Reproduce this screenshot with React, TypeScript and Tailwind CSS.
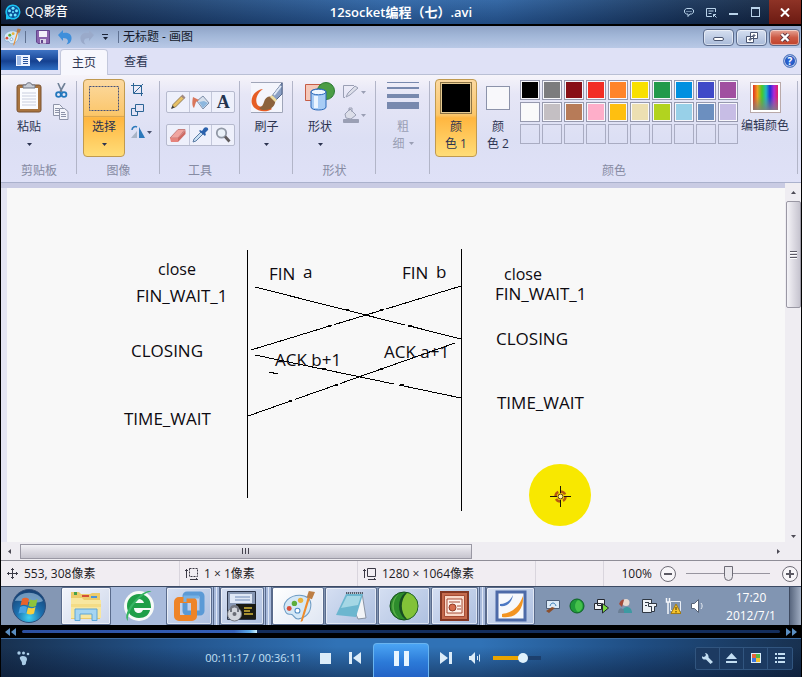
import type { ReactNode } from "react";

const ink = "text-[#2b3350]";

function Caret({ className = "" }: { className?: string }) {
  return (
    <svg width="5" height="3" viewBox="0 0 5 3" className={className} aria-hidden="true">
      <path d="M0 0h5L2.5 3z" fill="currentColor" />
    </svg>
  );
}

/* ---------- Player title bar ---------- */

function PlayerTitle() {
  return (
    <header className="grid h-[26px] grid-cols-[1fr_auto_1fr] border-b-2 border-black bg-[linear-gradient(rgba(255,255,255,0.06),rgba(0,0,20,0.22)),linear-gradient(90deg,#12233f_0%,#1d416f_22%,#2c64a6_48%,#2a60a0_62%,#17355c_85%,#12233c_100%)] text-white">
      <div className="flex items-center gap-1 pl-1">
        <svg width="16" height="16" viewBox="0 0 16 16" aria-hidden="true">
          <path d="M8 .5a7.500 7.500 0 1 1-3 14.400L1 15.500V11A7.500 7.500 0 0 1 8 .5z" fill="#19c4f4" />
          <circle cx="8" cy="8" r="6" fill="#0a4f96" />
          <g fill="#6fe6ff">
            <circle cx="8" cy="4.300" r="1.500" />
            <circle cx="11.500" cy="6.800" r="1.500" />
            <circle cx="10.200" cy="10.900" r="1.500" />
            <circle cx="5.800" cy="10.900" r="1.500" />
            <circle cx="4.500" cy="6.800" r="1.500" />
            <circle cx="8" cy="8" r="1" />
          </g>
        </svg>
        <span className="text-[12px] font-medium">QQ影音</span>
      </div>
      <h1 className="self-center text-[13px] leading-6 font-semibold">12socket编程（七）.avi</h1>
      <div className="flex items-stretch justify-end text-[#b9d3ea]">
        <button aria-label="反馈" className="flex w-[22px] items-center justify-center">
          <svg width="12" height="11" viewBox="0 0 12 11" fill="none" stroke="currentColor">
            <path d="M3.500 1.500h5l2 1.500v2.500l-2 1.500H7L5 9.500V7H3.500l-2-1.500V3z" />
            <path d="M3.500 4.500h1M5.500 4.500h1M7.500 4.500h1" />
          </svg>
        </button>
        <button aria-label="菜单" className="flex w-[22px] items-center justify-center">
          <svg width="11" height="11" viewBox="0 0 11 11" fill="none" stroke="currentColor">
            <path d="M6 9.500H.5v-8h9V5M2.500 4h5M2.500 6.500h3" />
            <path d="M7.500 10V7.500H10M7.500 7.500l3 3" />
          </svg>
        </button>
        <button aria-label="最小化" className="flex w-[22px] items-center justify-center">
          <span className="mt-1 h-0.5 w-[9px] bg-current" />
        </button>
        <button aria-label="最大化" className="mr-[3px] flex w-[22px] items-center justify-center">
          <span className="h-[10px] w-[9px] border border-t-2 border-current" />
        </button>
        <button aria-label="关闭" className="flex w-8 items-center justify-center bg-[linear-gradient(#8e3326,#6c1a12)] text-white">
          <svg width="10" height="9" viewBox="0 0 10 9" stroke="currentColor" strokeWidth="2">
            <path d="M1 .5l8 8M9 .5l-8 8" />
          </svg>
        </button>
      </div>
    </header>
  );
}

/* ---------- Paint window ---------- */

function PaletteIcon({ size }: { size: number }) {
  return (
    <svg width={size} height={size} viewBox="0 0 32 32" aria-hidden="true">
      <path d="M3 20C-1 12 8 5 17 5c7 0 11 4 11 9 0 8-5 13-12 14-5 .5-4-5-8-4.500C5 24 4 23 3 20z" fill="#d4e8f7" stroke="#6e9cc4" />
      <circle cx="7" cy="18" r="2.400" fill="#d94f3c" />
      <circle cx="12" cy="13" r="2.600" fill="#5cae3c" />
      <circle cx="18" cy="10" r="2.600" fill="#e9b33c" />
      <circle cx="15" cy="20" r="2.400" fill="#fff" stroke="#4c8ac4" />
      <path d="M27 8l-7 22-2 1 1-4 6-20z" fill="#ee8b2b" />
      <path d="M24 7l2-6 6 1-3 7z" fill="#bd7f45" />
    </svg>
  );
}

function PaintTitle() {
  const frame = "flex h-[17px] w-[31px] items-center justify-center rounded-sm border border-[#5b6b8c] shadow-[inset_0_0_0_1px_rgba(255,255,255,0.5)]";
  return (
    <div className="flex h-[22px] items-center bg-[linear-gradient(#8fa3c6,#a2b7d8_45%,#b9c9e6)] pl-0.5">
      <PaletteIcon size={18} />
      <span className="mx-1 h-3 w-px bg-[#5f7191]" />
      <button aria-label="保存" className="ml-1.5">
        <svg width="14" height="14" viewBox="0 0 14 14">
          <path d="M.5.5h13v13H2l-1.500-1.500z" fill="#8a63ad" stroke="#62458d" />
          <path d="M3 1h8v6H3z" fill="#f3effa" />
          <path d="M4 9h6v4.500H4z" fill="#d9d3ea" />
          <path d="M5 10h2v3H5z" fill="#62458d" />
        </svg>
      </button>
      <button aria-label="撤消" className="ml-2">
        <svg width="14" height="15" viewBox="0 0 14 15">
          <path d="M0 5l5-5v3c6-1 9 2 8.500 6-.3 3-2 5-5 5.500 2.500-3 2-6.500-3.500-6.500v3z" fill="#3f8fdb" />
        </svg>
      </button>
      <button aria-label="重做" className="ml-2">
        <svg width="14" height="15" viewBox="0 0 14 15">
          <path d="M14 5L9 0v3C3 2 0 5 .5 9c.3 3 2 5 5 5.500C3 11.500 3.500 8 9 8v3z" fill="#9aaaca" />
        </svg>
      </button>
      <button aria-label="自定义快速访问工具栏" className="ml-2 flex flex-col items-center gap-0.5 text-[#1c2437]">
        <span className="h-px w-1.5 bg-current" />
        <Caret />
      </button>
      <span className="mr-1 ml-2.5 h-3 w-px bg-[#5f7191]" />
      <h2 className="text-[12px] text-[#14192a]">无标题 - 画图</h2>
      <div className="mr-px ml-auto flex gap-0.5">
        <button aria-label="最小化" className={`${frame} bg-[linear-gradient(#d5dff0,#a9bad9)]`}>
          <span className="mt-1 h-1 w-[11px] rounded-xs border border-[#4a5570] bg-white" />
        </button>
        <button aria-label="向下还原" className={`${frame} bg-[linear-gradient(#d5dff0,#a9bad9)]`}>
          <svg width="12" height="11" viewBox="0 0 12 11" fill="#fff" stroke="#4a5570">
            <path d="M4.500.5h7v6h-7zM7 3h2v1H7zM.5 4.500h7v6h-7zM3 7h2v1H3z" />
          </svg>
        </button>
        <button aria-label="关闭" className={`${frame} bg-[linear-gradient(#e6a597,#cc5a45_50%,#c0412a)]`}>
          <svg width="12" height="9" viewBox="0 0 12 9">
            <path d="M2.500 1l7 7M9.500 1l-7 7" stroke="#5d3440" strokeWidth="4" />
            <path d="M2.500 1l7 7M9.500 1l-7 7" stroke="#fff" strokeWidth="2.400" />
          </svg>
        </button>
      </div>
    </div>
  );
}

function Tabs() {
  return (
    <nav className="flex h-[27px] items-stretch border-b border-[#b9bfd4] bg-[#dfe1f6]">
      <button aria-label="文件" className="mt-0.5 mb-1 flex w-[57px] items-center justify-center gap-1.5 bg-[linear-gradient(#3f74c4,#1f4d9e_45%,#15408f_55%,#2f6fc4)] text-white">
        <svg width="14" height="11" viewBox="0 0 14 11">
          <path d="M0 0h14v11H0z" fill="#eef4ff" />
          <path d="M1 1h4v9H1z" fill="#9fbbe6" />
          <path d="M7 2.500h5M7 4.500h5M7 6.500h5M7 8.500h5" stroke="#2a549c" />
        </svg>
        <svg width="7" height="4" viewBox="0 0 7 4">
          <path d="M0 0h7L3.500 4z" fill="currentColor" />
        </svg>
      </button>
      <button className="mt-px -mb-px ml-0.5 w-12 rounded-t-sm border border-b-0 border-[#c3c8dc] bg-[#f7f7fd] text-[12px] text-[#2b3350]">主页</button>
      <button className="ml-1 w-12 pt-px text-[12px] text-[#2b3350]">查看</button>
      <button aria-label="帮助" className="mr-1 ml-auto flex size-[14px] items-center justify-center self-center rounded-full border border-[#5d7fc0] bg-[radial-gradient(#2f6de0,#1c45a6)] text-[10px] leading-none font-bold text-white shadow-[inset_0_0_0_1px_rgba(255,255,255,0.7)]">
        ?
      </button>
    </nav>
  );
}

function Group({ label, width, children }: { label?: string; width: string; children: ReactNode }) {
  return (
    <section className={`${width} flex shrink-0 flex-col pt-1`}>
      <div className="flex h-[84px] items-start">{children}</div>
      <p className="text-center text-[12px] leading-4 text-[#868ba3]">{label}</p>
    </section>
  );
}

function Divider() {
  return <span className="-ml-px mt-1.5 mb-2 w-px shrink-0 bg-[#b2b5c8]" />;
}

const rowOne = ["bg-[#000000]", "bg-[#7c7c7e]", "bg-[#880f17]", "bg-[#f22e25]", "bg-[#ff8429]", "bg-[#f9e000]", "bg-[#229a4b]", "bg-[#0190e0]", "bg-[#3f49c8]", "bg-[#a04fa0]"];
const rowTwo = ["bg-[#fafafa]", "bg-[#c4bfc3]", "bg-[#b77b58]", "bg-[#feaec9]", "bg-[#ffbf10]", "bg-[#ecdfb2]", "bg-[#b2d31f]", "bg-[#98d0e8]", "bg-[#6c8fbf]", "bg-[#c7bde5]"];

function Ribbon() {
  const cell = "flex h-5 flex-1 items-center justify-center";
  const shelf = "flex w-[69px] items-stretch divide-x divide-[#c3c7da] rounded-xs border border-[#b6bace] bg-[#eef0fb]";
  return (
    <div className="flex h-[108px] overflow-hidden border-b border-[#aab1cc] bg-[linear-gradient(#f6f4fa,#e6e6f6_18%,#dcdff4_60%,#dfe1f7)]">
      <Group label="剪贴板" width="w-[76px]">
        <button className={`ml-3 flex w-8 flex-col items-center pt-[3px] ${ink}`}>
          <svg width="26" height="31" viewBox="0 0 26 31" aria-hidden="true">
            <rect x="1" y="3" width="24" height="27" rx="2" fill="#a9743f" stroke="#7a5230" />
            <path d="M4 6h18v21H4z" fill="#fbfcff" />
            <path d="M6 11h14M6 14h14M6 17h14M6 20h14M6 23h14" stroke="#c9cede" />
            <path d="M7 6V3h3c0-3 6-3 6 0h3v3z" fill="#c8ccd5" stroke="#6e7484" />
          </svg>
          <span className="mt-1.5 text-[12px] leading-4">粘贴</span>
          <Caret className="mt-2" />
        </button>
        <div className="mt-1 ml-2 flex flex-col gap-1.5">
          <button aria-label="剪切">
            <svg width="16" height="15" viewBox="0 0 16 15" fill="none">
              <path d="M5 0l4 9M12 0L7 9" stroke="#6f8096" strokeWidth="1.600" />
              <circle cx="5.500" cy="11.500" r="2.400" stroke="#2478bd" strokeWidth="1.800" />
              <circle cx="11" cy="11.500" r="2.400" stroke="#2478bd" strokeWidth="1.800" />
            </svg>
          </button>
          <button aria-label="复制">
            <svg width="16" height="16" viewBox="0 0 16 16" fill="#f4f5fb" stroke="#8d93a8">
              <path d="M.5.5h6l3 3v8h-9zM2 4.500h4M2 6.500h4M2 8.500h4" />
              <path d="M6.500 4.500h5l3.500 3v8H6.500zM8 8.500h4M8 10.500h5M8 12.500h5" />
            </svg>
          </button>
        </div>
      </Group>
      <Divider />
      <Group label="图像" width="w-[83px]">
        <button className={`ml-1.5 flex h-[78px] w-[42px] flex-col items-center rounded-sm border border-[#c09a50] bg-[linear-gradient(#fcd9a0,#fbc66a_46%,#ffb640_50%,#ffdd78)] ${ink}`}>
          <span className="flex h-[37px] w-full items-center justify-center border-b border-[#d9a753]">
            <svg width="30" height="25" viewBox="0 0 30 25" aria-hidden="true">
              <rect x=".5" y=".5" width="29" height="24" fill="none" stroke="#45507a" strokeDasharray="2 1" />
            </svg>
          </span>
          <span className="mt-0.5 text-[12px] leading-4">选择</span>
          <Caret className="mt-2" />
        </button>
        <div className="mt-1 ml-1.5 flex flex-col items-start gap-2 text-[#2b6495]">
          <button aria-label="裁剪">
            <svg width="14" height="13" viewBox="0 0 14 13" fill="none" stroke="currentColor">
              <path d="M2.500 0v10.500H12M0 2.500h10.500V13M3 10l9-9" />
            </svg>
          </button>
          <button aria-label="重新调整大小">
            <svg width="14" height="13" viewBox="0 0 14 13" fill="none" stroke="currentColor">
              <path d="M4.500.5h8v7h-8zM4 4.500H.5v7h6V8" />
            </svg>
          </button>
          <button aria-label="旋转" className="flex items-center gap-0.5">
            <svg width="14" height="14" viewBox="0 0 14 14">
              <path d="M8 2v11h6z" fill="#2c79bb" />
              <path d="M6 6v7H0z" fill="#a9b4c6" />
              <path d="M1 5c0-3 3-4 5-3" fill="none" stroke="#2c79bb" strokeWidth="1.500" />
            </svg>
            <Caret className="text-[#4a5270]" />
          </button>
        </div>
      </Group>
      <Divider />
      <Group label="工具" width="w-20">
        <div className="mt-3 ml-1.5 flex flex-col gap-[11px]">
          <div className={shelf}>
            <button aria-label="铅笔" className={cell}>
              <svg width="16" height="16" viewBox="0 0 16 16">
                <path d="M2 14l1-3.500L11.500 2 14 4.500 5.500 13z" fill="#e7c065" stroke="#7d6a48" strokeWidth=".8" />
                <path d="M1 15l1.500-3.500 2 2z" fill="#3b3b3b" />
                <path d="M11 2l1.500-1.500 3 3L14 5z" fill="#a08a86" />
              </svg>
            </button>
            <button aria-label="用颜色填充" className={cell}>
              <svg width="18" height="17" viewBox="0 0 18 17">
                <path d="M5 7l6-5 6 7-6 6z" fill="#d7e0ec" stroke="#8090aa" />
                <path d="M7 8l5-1 4 2-5 5z" fill="#8db7de" />
                <path d="M1 3l6 3-3 2-2 6C0 12 0 8 1 3z" fill="#d9765b" />
              </svg>
            </button>
            <button aria-label="文本" className={`${cell} font-["Liberation_Serif",serif] text-[18px] leading-none font-bold text-[#24344f]`}>
              A
            </button>
          </div>
          <div className={shelf}>
            <button aria-label="橡皮擦" className={cell}>
              <svg width="18" height="15" viewBox="0 0 18 15">
                <path d="M1 10L9 1.500h7L9 10z" fill="#f0a5a0" stroke="#c87f7d" />
                <path d="M1 10h8v4H2z" fill="#e5837c" />
                <path d="M9 10l7.500-8v4L9 14z" fill="#cf6a63" />
              </svg>
            </button>
            <button aria-label="颜色选取器" className={cell}>
              <svg width="17" height="16" viewBox="0 0 17 16">
                <path d="M1 15l1-3 7-7 2 2-7 7z" fill="#c9e0f4" stroke="#5c7da5" />
                <path d="M7 4l6 5 1-2-1-1 3-3c1-2-2-4-4-2L10 4 8 3z" fill="#2b62ad" />
              </svg>
            </button>
            <button aria-label="放大镜" className={cell}>
              <svg width="16" height="16" viewBox="0 0 16 16">
                <circle cx="6.500" cy="6" r="4.700" fill="#eaf1f8" stroke="#9198a5" strokeWidth="1.800" />
                <path d="M10 9.500l4.500 5" stroke="#5f5b5c" strokeWidth="2.800" />
              </svg>
            </button>
          </div>
        </div>
      </Group>
      <Divider />
      <Group width="w-[53px]">
        <button className={`flex w-full flex-col items-center pt-[3px] ${ink}`}>
          <svg width="32" height="31" viewBox="0 0 32 31" aria-hidden="true">
            <path d="M0 0h32v31H0z" fill="#f4f5fc" />
            <path d="M0 .5h31.500v30H0" fill="none" stroke="#9fa5b8" />
            <path d="M12 7C4 8-1 15 1 22c3 8 14 9 20 5l-6-6c-1 4-7 5-9 1S6 11 12 7z" fill="#e65d25" />
            <path d="M13 20c1-5 6-7 10-4 3 4 0 9-4 11-4 2-10 1-11-1 3-1 4-3 5-6z" fill="#8c623c" />
            <path d="M21 14L31 1v11l-6 6z" fill="#8ba0c4" stroke="#53678c" />
            <path d="M23 13l7-9" stroke="#dfe8f5" strokeWidth="2" />
            <path d="M19 15l2-2 5 5-2 2z" fill="#eddca0" />
          </svg>
          <span className="mt-1.5 text-[12px] leading-4">刷子</span>
          <Caret className="mt-2" />
        </button>
      </Group>
      <Divider />
      <Group label="形状" width="w-[83px]">
        <button className={`ml-[11px] flex w-8 flex-col items-center pt-[3px] ${ink}`}>
          <svg width="30" height="31" viewBox="0 0 30 31" aria-hidden="true">
            <path d="M.5 2.500h16v16H.5z" fill="#f5c8b9" stroke="#c65c45" />
            <circle cx="21" cy="9" r="8.500" fill="#4b9d45" stroke="#2c7a34" />
            <path d="M6 10c0-4 15-4 15 0v15c0 4-15 4-15 0z" fill="#a8ccf5" stroke="#2867b8" />
            <ellipse cx="13.500" cy="10" rx="7.500" ry="2.800" fill="#eef6ff" stroke="#2867b8" />
            <path d="M11 14v12" stroke="#eaf4ff" strokeWidth="4" />
          </svg>
          <span className="mt-1.5 text-[12px] leading-4">形状</span>
          <Caret className="mt-2" />
        </button>
        <div className="mt-1.5 ml-[7px] flex flex-col gap-2 text-[#9a9fb4]">
          <button aria-label="形状轮廓" className="flex items-center gap-0.5">
            <svg width="16" height="14" viewBox="0 0 16 14" fill="#dcdee9" stroke="currentColor">
              <path d="M11 .5H.5v12H2" fill="none" />
              <path d="M3 12l2-4 7-7 3 2-8 7z" />
            </svg>
            <Caret />
          </button>
          <button aria-label="形状填充" className="flex items-center gap-0.5">
            <svg width="16" height="16" viewBox="0 0 16 16" fill="#dcdee9" stroke="currentColor">
              <path d="M2 7l5-5 6 6-5 4-5-1zM6 4V1h3v4" />
              <path d="M.5 12.500h15v3H.5z" fill="currentColor" />
            </svg>
            <Caret />
          </button>
        </div>
      </Group>
      <Divider />
      <Group width="w-[54px]">
        <button className="flex w-full flex-col items-center pt-[3px] text-[#9a9fb4]">
          <svg width="32" height="28" viewBox="0 0 32 28" fill="#7889ae" aria-hidden="true">
            <path d="M0 0h32v1H0zM0 5h32v2H0zM0 12h32v4H0zM0 20h32v7H0z" />
          </svg>
          <span className="mt-2 text-center text-[12px] leading-[17px]">
            粗
            <span className="flex items-center gap-1">
              细
              <Caret />
            </span>
          </span>
        </button>
      </Group>
      <Divider />
      <section className="flex min-w-[368px] flex-1 flex-col pt-1">
        <div className="flex h-[84px] items-start">
          <button className={`ml-[5px] flex h-[78px] w-[42px] shrink-0 flex-col items-center rounded-sm border border-[#c09a50] bg-[linear-gradient(#fcd9a0,#fbc66a_46%,#ffb640_50%,#ffdd78)] ${ink}`}>
            <span className="mt-0.5 size-8 border border-[#8d7445] bg-black shadow-[inset_0_0_0_1px_#e7cb92]" />
            <span className="mt-1 text-center text-[12px] leading-[17px]">
              颜
              <br />色 1
            </span>
          </button>
          <button className={`flex h-[78px] w-[42px] shrink-0 flex-col items-center ${ink}`}>
            <span className="mt-[7px] size-6 border border-[#8c93aa] bg-[#f8f8fb]" />
            <span className="mt-2 text-center text-[12px] leading-[17px]">
              颜
              <br />色 2
            </span>
          </button>
          <div className="mt-px ml-px grid shrink-0 grid-cols-10 gap-0.5">
            {[...rowOne, ...rowTwo].map((c) => (
              <button key={c} aria-label="颜色" className={`${c} size-5 border border-[#9699ae] shadow-[inset_0_0_0_1px_#f8f8fc]`} />
            ))}
            {rowOne.map((c) => (
              <button key={c} aria-label="自定义颜色" className="size-5 border border-[#a9acc2]" />
            ))}
          </div>
          <button className={`ml-[3px] flex w-12 shrink-0 flex-col items-center pt-1 text-[12px] whitespace-nowrap ${ink}`}>
            <span className="size-[29px] border-2 border-white bg-[linear-gradient(rgba(128,128,128,0)_45%,rgba(128,128,128,0.85)),linear-gradient(90deg,#e03020,#f0a020_18%,#48c828_36%,#20b8c0_52%,#2030d8_68%,#b028d8_84%,#e02060)] shadow-[0_0_0_1px_#b9a9a9]" />
            <span className="mt-1.5 leading-4">编辑颜色</span>
          </button>
        </div>
        <p className="text-center text-[12px] leading-4 text-[#868ba3]">颜色</p>
      </section>
      <Divider />
      <span className="w-[3px] shrink-0" />
    </div>
  );
}

/* ---------- Drawing ---------- */

const notes: [number, number, string][] = [
  [136, 302, "FIN_WAIT_1"],
  [131, 357, "CLOSING"],
  [124, 425, "TIME_WAIT"],
  [269, 280, "FIN"],
  [303, 278, "a"],
  [402, 279, "FIN"],
  [436, 278, "b"],
  [275, 366, "ACK b+1"],
  [384, 358, "ACK a+1"],
  [495, 300, "FIN_WAIT_1"],
  [496, 345, "CLOSING"],
  [497, 409, "TIME_WAIT"],
];

function Drawing() {
  return (
    <svg width="778" height="354" viewBox="7 188 778 354" className="block" role="img" aria-label="TCP 同时关闭">
      <g stroke="#000" shapeRendering="crispEdges">
        <path d="M247.500 250v248M461.500 249v262" />
        <path d="M255 287l150 38M408 325.600L461 339" />
        <path d="M461 286l-75 23M384 309.500l-50 15.200M332 325.300L251 350" />
        <path d="M255 355l139 29M399 385l62 13" />
        <path d="M455 343l-115 40.600M338 384.300l-43 15.100M292 400.500L248 416" />
        <path d="M269 372l9 2" />
      </g>
      <path d="M346 309h3v2h-3zM328 325h3v2h-3zM408 325h4v2h-4zM380 309h3v2h-3zM335 384h3v2h-3zM289 400h3v2h-3zM322 368h4v2h-4zM380 368h3v2h-3zM400 384h4v2h-4z" />
      <g fill="#0d0a10" fontSize="17">
        {notes.map(([x, y, text]) => (
          <text key={`${x}-${y}`} x={x} y={y}>
            {text}
          </text>
        ))}
      </g>
      <g fill="#0d0a10" fontSize="16">
        <text x="158" y="275">close</text>
        <text x="504" y="280">close</text>
      </g>
      <circle cx="560" cy="495" r="31" fill="#f8e800" />
      <circle cx="560.500" cy="496.500" r="5" fill="none" stroke="#b85a12" strokeWidth="2.500" strokeDasharray="5 2.850" />
      <circle cx="560.500" cy="496.500" r="2.500" fill="#fff3a0" stroke="#5c2d0c" />
      <path d="M560.500 486v7M560.500 500v7M550 496.500h7M564 496.500h7" stroke="#1d1606" />
    </svg>
  );
}

function Workspace() {
  return (
    <main className="grid flex-1 grid-cols-[6px_1fr_16px] grid-rows-[1fr_18px] bg-[#efedf2]">
      <div className="border-t-[5px] border-[#c9cbe3] bg-[#e4e5f3]" />
      <div className="overflow-hidden border-t-[5px] border-[#c9cbe3] bg-[#f8f8f8]">
        <Drawing />
      </div>
      <div className="flex flex-col items-center pt-2 pb-1 text-[#4c4a55]">
        <Caret className="rotate-180" />
        <div className="mt-[7px] flex h-[107px] w-[15px] flex-col items-center justify-center gap-px rounded-xs border border-[#9a98a4] bg-[linear-gradient(90deg,#f4f3f7,#dddbe3_50%,#c6c4cf)]">
          <span className="h-0.5 w-[7px] border-b border-white bg-[#5d5b66]" />
          <span className="h-0.5 w-[7px] border-b border-white bg-[#5d5b66]" />
          <span className="h-0.5 w-[7px] border-b border-white bg-[#5d5b66]" />
        </div>
        <Caret className="mt-auto" />
      </div>
      <div className="col-span-2 flex items-center pr-1 pl-1.5 text-[#4c4a55]">
        <Caret className="rotate-90" />
        <div className="ml-2 flex h-[15px] w-7/12 items-center justify-center gap-0.5 border border-[#9a98a4] bg-[linear-gradient(#f2f1f5,#dbd9e1_50%,#c6c4ce)]">
          <span className="h-1.5 w-px bg-[#45434e]" />
          <span className="h-1.5 w-px bg-[#45434e]" />
          <span className="h-1.5 w-px bg-[#45434e]" />
        </div>
        <Caret className="ml-auto -rotate-90" />
      </div>
    </main>
  );
}

function StatusBar() {
  return (
    <footer className="flex h-[26px] items-stretch border-t border-[#8f8d97] bg-[#f1edf2] text-[12px] text-[#1d1b24] *:items-center">
      <p className="flex w-[179px] gap-1.5 border-r border-[#d9d5dd] pl-1.5">
        <svg width="11" height="11" viewBox="0 0 11 11" fill="none" stroke="#3b3945">
          <path d="M5.500 0v11M0 5.500h11M4 1.500h3M4 9.500h3M1.500 4v3M9.500 4v3" />
        </svg>
        553, 308像素
      </p>
      <p className="flex w-[178px] gap-1.5 border-r border-[#d9d5dd] pl-[5px]">
        <svg width="13" height="12" viewBox="0 0 13 12" fill="none" stroke="#3b3945">
          <path d="M1.500 1v9M0 2.500h3M5 11.500h8M11.500 10v2" />
          <path d="M4.500.5h8v8h-8z" strokeDasharray="2 1" />
        </svg>
        1 × 1像素
      </p>
      <p className="flex w-[178px] gap-1.5 border-r border-[#d9d5dd] pl-[5px]">
        <svg width="13" height="12" viewBox="0 0 13 12" fill="none" stroke="#3b3945">
          <path d="M1.500 1v9M0 2.500h3M5 11.500h8M11.500 10v2M4.500.5h8v8h-8z" />
        </svg>
        1280 × 1064像素
      </p>
      <span className="w-[68px] border-r border-[#d9d5dd]" />
      <div className="ml-auto flex pr-[3px]">
        <label htmlFor="zoom">100%</label>
        <button aria-label="缩小" className="ml-2 flex size-4 items-center justify-center rounded-full border border-[#6e6c76] bg-[#f8f6f9]">
          <span className="h-0.5 w-2 bg-[#5c5a64]" />
        </button>
        <input
          id="zoom"
          type="range"
          defaultValue={50}
          className="mx-2.5 h-4 w-[84px] appearance-none bg-[linear-gradient(#98959f,#98959f)] bg-[length:100%_1px] bg-center bg-no-repeat [&::-webkit-slider-thumb]:h-[15px] [&::-webkit-slider-thumb]:w-[9px] [&::-webkit-slider-thumb]:appearance-none [&::-webkit-slider-thumb]:rounded-b-md [&::-webkit-slider-thumb]:border [&::-webkit-slider-thumb]:border-[#6e6c76] [&::-webkit-slider-thumb]:bg-[#e9e7ec]"
        />
        <button aria-label="放大" className="ml-0.5 flex size-4 items-center justify-center rounded-full border border-[#6e6c76] bg-[#f8f6f9]">
          <svg width="8" height="8" viewBox="0 0 8 8" stroke="#5c5a64" strokeWidth="2">
            <path d="M4 0v8M0 4h8" />
          </svg>
        </button>
      </div>
    </footer>
  );
}

/* ---------- Windows taskbar ---------- */

function Task({ label, width, tone = "bg-[linear-gradient(135deg,#d5dff2,#aec0e0)]", children }: { label: string; width: string; tone?: string; children: ReactNode }) {
  return (
    <button aria-label={label} className={`${width} ${tone} flex shrink-0 items-center justify-center rounded-xs border border-[#5a6b8c] shadow-[inset_0_0_0_1px_rgba(255,255,255,0.55)]`}>
      {children}
    </button>
  );
}

function Stack() {
  return (
    <span className="flex w-2 shrink-0 gap-0.5 bg-[#a9bbdc] pl-px">
      <span className="w-px bg-[#5a6b8c]" />
      <span className="w-px bg-[#dfe7f6]" />
      <span className="w-px bg-[#5a6b8c]" />
    </span>
  );
}

function Taskbar() {
  return (
    <div className="flex h-[39px] items-stretch overflow-hidden border-t border-[#3c4a63] bg-[#8195b2]">
      <button aria-label="开始" className="flex w-[60px] shrink-0 items-center justify-center bg-[#8497b4] pr-1">
        <svg width="36" height="36" viewBox="0 0 36 36">
          <defs>
            <radialGradient id="orb" cx=".5" cy=".85" r=".85">
              <stop offset="0" stopColor="#3fd0f0" />
              <stop offset=".45" stopColor="#1c6fae" />
              <stop offset="1" stopColor="#173d6e" />
            </radialGradient>
          </defs>
          <circle cx="18" cy="18" r="16.500" fill="url(#orb)" stroke="#2e4f7c" />
          <path d="M4 13C8 2 28 2 32 13 24 17 14 12 4 13z" fill="#a9c9e4" opacity=".6" />
          <path d="M11 11c3-2 5-1 7 0l-1.500 6.500c-2.500-1-4.500-1-7 0z" fill="#e8632b" />
          <path d="M19 11.500c3 1 5 1 7.500-.5L25 18c-3 1.500-5 1-7.500 0z" fill="#8fc43c" />
          <path d="M9 19c3-1.500 5-1 7 0l-1.500 6.500c-2-1-4.500-1-7 0z" fill="#4ba3e3" />
          <path d="M17 19.500c3 1 5 1 7.500-.5L23 25.500c-3 1.500-5 1-7.500 0z" fill="#f8cf3d" />
        </svg>
      </button>
      <Task label="资源管理器" width="w-[50px]" tone="bg-[linear-gradient(135deg,#f3f5fb,#ccd6ea)]">
        <svg width="32" height="30" viewBox="0 0 32 30">
          <path d="M1 4V1h8l2 2h9l2-1h8v26H1z" fill="#eccb6c" />
          <path d="M4 1h3v3H4z" fill="#46a049" />
          <path d="M12 4h7v2h-7z" fill="#d35038" />
          <path d="M21 5h6v2h-6z" fill="#4c94d8" />
          <path d="M1 7h11l2 2h17v18H1z" fill="#f8e7a0" />
          <path d="M1 13h30v3H1z" fill="#f4dc86" />
          <path d="M5 29.500V18h22v11.500h-5V23H10v6.500z" fill="#a5d5f2" stroke="#5ea5d6" />
        </svg>
      </Task>
      <button aria-label="浏览器" className="flex w-[55px] shrink-0 items-center justify-center bg-[#a9bbdc]">
        <svg width="32" height="32" viewBox="0 0 32 32">
          <circle cx="16" cy="16" r="15" fill="#f7faf8" />
          <path d="M28 17c0-8-5-13-12-13S4 9 4 16s5 12 12 12c6 0 10-3 11-8h-7c-1 2-2 3-4 3-3 0-5-2-5-5h17zM11 13c1-3 3-4 5-4s4 1 5 4z" fill="#1f9f48" fillRule="evenodd" />
          <path d="M5 31C1 28 4 18 13 9S27 0 29 2c-4-1-9 3-15 9S4 26 5 31z" fill="#36b463" />
        </svg>
      </button>
      <Task label="虚拟机" width="w-[46px]">
        <svg width="32" height="32" viewBox="0 0 32 32" fill="none">
          <rect x="12" y="4" width="17" height="19" rx="2" stroke="#5b9ad6" strokeWidth="5" />
          <rect x="4" y="10" width="17" height="18" rx="2" stroke="#ee8428" strokeWidth="6" />
          <path d="M12 12V7h14" stroke="#76b2e6" strokeWidth="3" />
        </svg>
      </Task>
      <Stack />
      <Task label="终端" width="w-[44px]">
        <svg width="32" height="32" viewBox="0 0 32 32">
          <path d="M1.500 1.500h28v28h-28z" fill="#8797b3" stroke="#2b354a" />
          <path d="M4 4h22v9H4z" fill="#dfe8f6" />
          <path d="M9 7h15M9 10h15" stroke="#6f8ab7" />
          <path d="M10 14h20v15H10z" fill="#191a14" />
          <path d="M18 18h8M18 21h6M18 24h9" stroke="#d6b93b" strokeWidth="1.500" />
          <circle cx="8.500" cy="24" r="7" fill="#d3d6dc" stroke="#72767f" />
          <path d="M5 22v-3c0-4 7-4 7 0v3" fill="none" stroke="#72767f" strokeWidth="2" />
          <circle cx="8.500" cy="24" r="2" fill="#6a6d75" />
        </svg>
      </Task>
      <Stack />
      <Task label="画图" width="w-[52px]" tone="bg-[linear-gradient(135deg,#ffffff,#dfe6f3)]">
        <PaletteIcon size={33} />
      </Task>
      <Task label="记事本" width="w-[52px]" tone="ml-px bg-[linear-gradient(135deg,#d5dff2,#aec0e0)]">
        <svg width="32" height="30" viewBox="0 0 32 30">
          <path d="M12 2h15l4 25-8 1z" fill="#f2f4f7" stroke="#8a93a3" />
          <path d="M11 3h17l-7 23L1 24z" fill="#6cb6cf" />
          <path d="M12 5h14l-3 9L6 17z" fill="#a5d7e5" />
          <path d="M11 2h18" stroke="#545c6b" strokeWidth="2" strokeDasharray="1 1" />
        </svg>
      </Task>
      <Task label="音乐" width="w-[52px]" tone="ml-px bg-[linear-gradient(135deg,#d5dff2,#aec0e0)]">
        <svg width="32" height="32" viewBox="0 0 32 32">
          <circle cx="16" cy="16" r="14" fill="#2d8c2c" stroke="#15501c" />
          <path d="M11 4C4 10 4 22 11 28 2 24 2 9 11 4z" fill="#5aae49" />
          <path d="M17 3c-8 6-8 20 0 26 8 0 8-26 0-26z" fill="#174d22" />
          <path d="M19 3c-7 7-7 19 0 26 14-3 14-23 0-26z" fill="#82c238" />
        </svg>
      </Task>
      <Task label="演示文稿" width="w-[47px]" tone="ml-px bg-[linear-gradient(135deg,#d5dff2,#aec0e0)]">
        <svg width="29" height="30" viewBox="0 0 29 30">
          <path d="M1 1h27v28H1z" fill="#c56a4d" stroke="#823623" strokeWidth="2" />
          <path d="M4.500 4.500h20v21h-20z" fill="#f9d8c9" stroke="#a64b34" />
          <path d="M7 8h15v14H7z" fill="#fff3ed" stroke="#a64b34" />
          <path d="M9 11h11M17 15h4M17 18h4" stroke="#a64b34" />
          <circle cx="12.500" cy="16.500" r="3.500" fill="#d66c4d" stroke="#8f3b27" />
        </svg>
      </Task>
      <Stack />
      <Task label="远程桌面" width="w-[49px]" tone="bg-[linear-gradient(135deg,#d5dff2,#aec0e0)]">
        <svg width="32" height="32" viewBox="0 0 32 32">
          <path d="M2 2h28v28H2z" fill="#f6f8fc" stroke="#4d6aa8" strokeWidth="3" />
          <path d="M5 14c6 0 10-3 13-9-1 7-6 12-13 11z" fill="#4b78c4" />
          <path d="M7 24c10-1 17-7 21-18 1 13-7 23-21 21z" fill="#f29422" />
        </svg>
      </Task>
      <div className="ml-auto flex items-center gap-2 pl-2">
        <svg width="16" height="16" viewBox="0 0 16 16">
          <path d="M1.500 2.500h13v8h-13z" fill="#dbe9f6" stroke="#4c5e78" />
          <path d="M5 8c1-4 5-4 6 0" stroke="#3d7fb8" fill="none" />
          <path d="M1 13l6-4 3 1-6 5z" fill="#8c4f2c" />
        </svg>
        <svg width="16" height="16" viewBox="0 0 16 16">
          <circle cx="8" cy="8" r="7" fill="#1f9a3a" stroke="#0d6124" />
          <path d="M9 2c-4 3-4 9 0 12 6-2 6-10 0-12z" fill="#45c14b" />
        </svg>
        <svg width="16" height="16" viewBox="0 0 16 16" stroke="#23272f">
          <path d="M4.500 1.500h7v6h-7zM1.500 5.500h7v6h-7z" fill="#f2f4f7" />
          <path d="M9.500 5.500l6 4.500-6 5z" fill="#7bdc3e" />
        </svg>
        <svg width="16" height="16" viewBox="0 0 16 16">
          <circle cx="9" cy="4.500" r="3.500" fill="#ead9cf" />
          <path d="M5 15c0-8 10-8 10 0z" fill="#3d9aa2" />
          <path d="M2 6c2-5 5-5 5-4l-2 7z" fill="#a44b3a" />
          <path d="M1 15c0-6 5-6 6-2v2z" fill="#6b7f95" />
        </svg>
        <svg width="16" height="16" viewBox="0 0 16 16" fill="#eef2f7" stroke="#2f3742">
          <path d="M1.500 1.500h9v13h-9z" />
          <path d="M4 4.500h4M4 7.500h2M10.500 1.500v3M7.500 5.500h8v3h-2v5h-3v-5h-3z" />
        </svg>
        <svg width="16" height="16" viewBox="0 0 16 16">
          <path d="M5.500 3.500h10v9h-10z" fill="#7f93ad" stroke="#e9eef5" />
          <path d="M1.500 0v4h3V0M3 4v12" stroke="#f4f6fa" strokeWidth="1.500" fill="none" />
          <path d="M11 6l5 9.500H6z" fill="#f7c52c" stroke="#a67b10" />
          <path d="M11 9v3M11 13v1.500" stroke="#3b2e06" />
        </svg>
        <svg width="16" height="16" viewBox="0 0 16 16">
          <path d="M2.500 5.500h3l4-4v13l-4-4h-3z" fill="#fff" stroke="#566276" />
          <path d="M12 5c1.500 2 1.500 4 0 6" stroke="#e9eef5" fill="none" />
        </svg>
      </div>
      <p className="mr-2.5 ml-[18px] w-14 shrink-0 pt-0.5 text-center text-[12px] leading-[18px] text-white">
        17:20
        <br />
        2012/7/1
      </p>
      <button aria-label="显示桌面" className="w-3 shrink-0 border-l border-[#3e4a60] bg-[linear-gradient(90deg,#59677f,#a0adc2)]" />
    </div>
  );
}

/* ---------- Player controls ---------- */

function Player() {
  const tool = "flex w-6 items-center justify-center";
  return (
    <>
      <div className="flex h-[13px] items-center justify-between gap-1.5 bg-black px-1 text-[#5b8fc2]">
        <button aria-label="快退">
          <svg width="11" height="8" viewBox="0 0 11 8" fill="currentColor">
            <path d="M5 0v8L0 4zM11 0v8L6 4z" />
          </svg>
        </button>
        <input
          type="range"
          aria-label="播放进度"
          defaultValue={31}
          className="h-[3px] min-w-0 flex-1 appearance-none rounded-full bg-[linear-gradient(90deg,#2c4f9e,#3560b8_28%,#5aa8e8_30%,#cdf2ff_31%,#142e5c_31%)] [&::-webkit-slider-thumb]:size-0.5 [&::-webkit-slider-thumb]:appearance-none"
        />
        <button aria-label="快进">
          <svg width="11" height="8" viewBox="0 0 11 8" fill="currentColor">
            <path d="M0 0v8l5-4zM6 0v8l5-4z" />
          </svg>
        </button>
      </div>
      <div className="grid h-[39px] grid-cols-[1fr_56px_1fr] border-t border-[#3b6a9f] bg-[linear-gradient(rgba(6,16,40,0)_20%,rgba(6,16,40,0.45)),linear-gradient(90deg,#183150,#23548c_22%,#3072b6_42%,#3072b6_60%,#1f4d82_80%,#183150)] text-[#dcecf8]">
        <div className="flex items-center">
          <button aria-label="足迹" className="ml-4 text-[#a9cbe6]">
            <svg width="13" height="15" viewBox="0 0 13 15" fill="currentColor">
              <circle cx="2" cy="2" r="1.700" />
              <circle cx="6.500" cy="2" r="1.500" />
              <circle cx="11" cy="3" r="1.300" />
              <path d="M3 6c2-2 7-1 7 2 0 2-1 2-1 4 0 3-5 3-4 0 0-2-3-4-2-6z" />
            </svg>
          </button>
          <time className="ml-auto text-[11px] text-[#c2e0f6]">00:11:17 / 00:36:11</time>
          <button aria-label="停止" className="ml-[18px] size-[11px] bg-current" />
          <button aria-label="上一个" className="mr-3 ml-[18px]">
            <svg width="12" height="12" viewBox="0 0 12 12" fill="currentColor">
              <path d="M0 0h3v12H0zM12 0v12L4 6z" />
            </svg>
          </button>
        </div>
        <button aria-label="暂停" className="mt-1 flex items-center justify-center gap-[5px] rounded-t-sm border border-b-0 border-[#69b4f0] bg-[linear-gradient(#4ba5f4,#2c7ad8_55%,#2363c6)] pb-1">
          <span className="h-[15px] w-[5px] bg-[#e8f5ff]" />
          <span className="h-[15px] w-[5px] bg-[#e8f5ff]" />
        </button>
        <div className="flex items-center">
          <button aria-label="下一个" className="ml-[11px]">
            <svg width="12" height="12" viewBox="0 0 12 12" fill="currentColor">
              <path d="M0 0v12l8-6zM9 0h3v12H9z" />
            </svg>
          </button>
          <button aria-label="静音" className="ml-[17px]">
            <svg width="12" height="12" viewBox="0 0 12 12" fill="currentColor">
              <path d="M0 4h2l4-4v12L2 8H0zM8 4h1v4H8zM10 2.500h1v7h-1z" />
            </svg>
          </button>
          <input
            type="range"
            aria-label="音量"
            defaultValue={66}
            className="ml-3 h-[10px] w-12 appearance-none bg-[linear-gradient(90deg,#e9a400_66%,#1c3f6d_66%)] bg-[length:100%_4px] bg-center bg-no-repeat [&::-webkit-slider-thumb]:size-[10px] [&::-webkit-slider-thumb]:appearance-none [&::-webkit-slider-thumb]:rounded-full [&::-webkit-slider-thumb]:bg-[#dff1fc]"
          />
          <div className="mr-2 ml-auto flex h-[23px] divide-x divide-[#31557f] rounded-xs border border-[#31557f] bg-[#1c3a61] text-[#c3def2]">
            <button aria-label="工具" className={tool}>
              <svg width="11" height="11" viewBox="0 0 11 11">
                <path d="M3 0l1 2-1 1.500L1 4 0 3c-.5 3 2 4 4 3.500L8.500 11 11 9 6.500 4.500C7 2 5 0 3 0z" fill="currentColor" />
              </svg>
            </button>
            <button aria-label="打开文件" className={tool}>
              <svg width="11" height="10" viewBox="0 0 11 10" fill="currentColor">
                <path d="M5.500 0L11 6H0zM0 8h11v2H0z" />
              </svg>
            </button>
            <button aria-label="画面" className={tool}>
              <svg width="10" height="10" viewBox="0 0 10 10">
                <path d="M0 0h10v10H0z" fill="#d8ecfa" />
                <path d="M1 1h4v4H1z" fill="#e8643a" />
                <path d="M5 1h4v4H5z" fill="#57b843" />
                <path d="M1 5h4v4H1z" fill="#3d78e0" />
                <path d="M5 5h4v4H5z" fill="#f6c12e" />
              </svg>
            </button>
            <button aria-label="播放列表" className={tool}>
              <svg width="10" height="10" viewBox="0 0 10 10" fill="currentColor">
                <path d="M0 0h2v2H0zM3 0h7v2H3zM0 4h2v2H0zM3 4h7v2H3zM0 8h2v2H0zM3 8h7v2H3z" />
              </svg>
            </button>
          </div>
        </div>
      </div>
    </>
  );
}

export default function App() {
  return (
    <div className='flex min-h-screen flex-col bg-black px-px font-["Open_Sans","Noto_Sans_CJK_SC",sans-serif]'>
      <PlayerTitle />
      <PaintTitle />
      <Tabs />
      <Ribbon />
      <Workspace />
      <StatusBar />
      <Taskbar />
      <Player />
    </div>
  );
}
